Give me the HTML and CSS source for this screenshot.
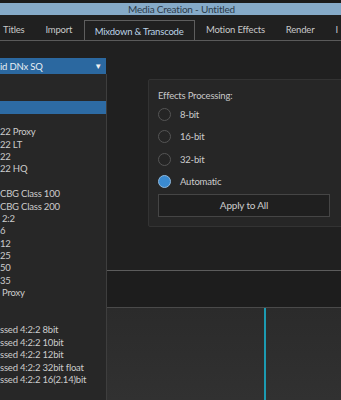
FILE: index.html
```html
<!DOCTYPE html>
<html>
<head>
<meta charset="utf-8">
<link rel="stylesheet" href="styles.css">
</head>
<body>
<div class="titlebar">Media Creation - Untitled</div>
<div class="tabs">
  <div class="tab first">Titles</div>
  <div class="tab">Import</div>
  <div class="tab active">Mixdown &amp; Transcode</div>
  <div class="tab">Motion Effects</div>
  <div class="tab">Render</div>
  <div class="tab last">I</div>
</div>
<div class="main">
  <div class="leftcol">
    <div class="dropdown"><span>id DNx SQ</span><span class="arrow">▼</span></div>
    <div class="list">
      <div class="item"></div>
      <div class="item"></div>
      <div class="item sel"></div>
      <div class="item"></div>
      <div class="item">22 Proxy</div>
      <div class="item">22 LT</div>
      <div class="item">22</div>
      <div class="item">22 HQ</div>
      <div class="item"></div>
      <div class="item">CBG Class 100</div>
      <div class="item">CBG Class 200</div>
      <div class="item ind">2:2</div>
      <div class="item">6</div>
      <div class="item">12</div>
      <div class="item">25</div>
      <div class="item">50</div>
      <div class="item">35</div>
      <div class="item ind">Proxy</div>
      <div class="item"></div>
      <div class="item"></div>
      <div class="item">ssed 4:2:2 8bit</div>
      <div class="item">ssed 4:2:2 10bit</div>
      <div class="item">ssed 4:2:2 12bit</div>
      <div class="item">ssed 4:2:2 32bit float</div>
      <div class="item">ssed 4:2:2 16(2.14)bit</div>
    </div>
  </div>
  <div class="rightcol">
    <div class="panel">
      <div class="panel-title">Effects Processing:</div>
      <div class="radios">
        <div class="radio"><span class="dot"></span>8-bit</div>
        <div class="radio"><span class="dot"></span>16-bit</div>
        <div class="radio"><span class="dot"></span>32-bit</div>
        <div class="radio"><span class="dot on"></span>Automatic</div>
      </div>
      <div class="button">Apply to All</div>
    </div>
    <div class="spacer"></div>
    <div class="strip"></div>
    <div class="timeline"><div class="playhead"></div></div>
  </div>
</div>
</body>
</html>
```

FILE: styles.css
```css
* { box-sizing: border-box; }
html, body { margin: 0; padding: 0; }
body {
  width: 341px;
  height: 400px;
  overflow: hidden;
  background: #202020;
  font-family: Lato, "Open Sans", sans-serif;
  font-size: 9.5px;
  letter-spacing: -0.2px;
  color: #c8c8c8;
  border-top: 3px solid #1a1a1a;
}
.titlebar {
  height: 12px;
  background: #85aac8;
  color: #2c3b4a;
  text-align: center;
  line-height: 12px;
  font-size: 10px;
  padding-left: 22px;
  white-space: nowrap;
}
.tabs {
  height: 26px;
  display: flex;
  align-items: flex-end;
  border-bottom: 1px solid #5a5a5a;
  padding-left: 3px;
  white-space: nowrap;
  overflow: hidden;
  font-size: 9.5px;
}
.tab {
  height: 20px;
  line-height: 20px;
  padding: 0 10.5px;
  color: #c8c8c8;
  flex: none;
}
.tab.first { padding-left: 0; }
.tab.last { padding-right: 0; }
.tab.active {
  border: 1px solid #5e5e5e;
  border-bottom: none;
  background: #202020;
  height: 21px;
  line-height: 21px;
  color: #bcd4e8;
  padding: 0 10px;
  margin: 0 1px -1px 1px;
}
.main {
  display: flex;
  height: 359px;
}
.leftcol {
  width: 107px;
  flex: none;
  display: flex;
  flex-direction: column;
  padding-top: 17px;
}
.dropdown {
  height: 16px;
  background: #2b68a0;
  color: #e8eef4;
  display: flex;
  justify-content: space-between;
  align-items: center;
  padding-right: 4px;
  width: 106px;
  white-space: nowrap;
  font-size: 9.5px;
}
.arrow { font-size: 8px; color: #f2f2f2; }
.list {
  flex: 1;
  background: #272727;
  border-right: 1px solid #3e3e3e;
  padding-top: 2px;
}
.item {
  height: 12.4px;
  line-height: 12.4px;
  white-space: nowrap;
  color: #cccccc;
}
.item.ind { padding-left: 2px; }
.item.sel { background: #2d6ba4; height: 13px; }
.rightcol {
  flex: 1;
  display: flex;
  flex-direction: column;
}
.panel {
  margin: 38px -4px 0 41px;
  height: 148px;
  background: #262626;
  border: 1px solid #333;
  border-radius: 2px;
  padding: 10px 0 0 9px;
}
.panel-title { line-height: 12px; color: #c8c8c8; }
.radios {
  display: flex;
  flex-direction: column;
  margin-top: 1px;
}
.radio {
  display: flex;
  align-items: center;
  height: 22.5px;
  gap: 9px;
  color: #cccccc;
}
.dot {
  width: 13px;
  height: 13px;
  border-radius: 50%;
  border: 1px solid #555;
  background: #252525;
  flex: none;
}
.dot.on {
  background: #3a8ad0;
  border: 1px solid #8fb8dc;
}
.button {
  margin-top: 1px;
  width: 172px;
  height: 23px;
  border: 1px solid #454545;
  background: #1f1f1f;
  text-align: center;
  line-height: 21px;
  color: #cccccc;
  font-size: 10px;
}
.spacer { height: 43px; flex: none; }
.strip {
  height: 37px;
  flex: none;
  border-top: 1px solid #5c5c5c;
  background: #1d1d1d;
}
.timeline {
  flex: 1;
  border-top: 1px solid #4a4a4a;
  background: linear-gradient(#2b2b2b, #313131);
  padding-left: 157px;
}
.playhead {
  width: 2px;
  height: 100%;
  background: #1c9bb2;
}
```
